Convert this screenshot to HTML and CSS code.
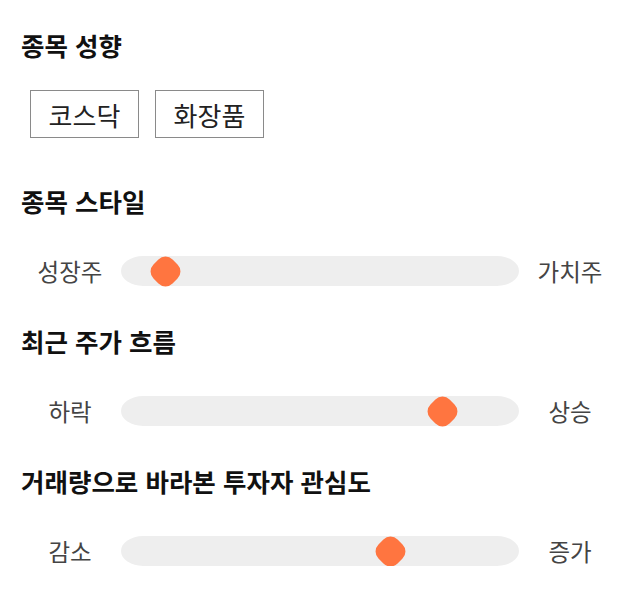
FILE: index.html
```html
<!DOCTYPE html>
<html lang="ko">
<head>
<meta charset="utf-8">
<link rel="stylesheet" href="styles.css">
</head>
<body>
<main class="page">
  <section class="section section-tags">
    <h2 class="title">종목 성향</h2>
    <div class="tags">
      <span class="tag">코스닥</span>
      <span class="tag">화장품</span>
    </div>
  </section>

  <section class="section">
    <h2 class="title">종목 스타일</h2>
    <div class="scale">
      <span class="label label-start">성장주</span>
      <div class="track"><span class="thumb" style="left: 11.2%"></span></div>
      <span class="label label-end">가치주</span>
    </div>
  </section>

  <section class="section">
    <h2 class="title">최근 주가 흐름</h2>
    <div class="scale">
      <span class="label label-start">하락</span>
      <div class="track"><span class="thumb" style="left: 80.7%"></span></div>
      <span class="label label-end">상승</span>
    </div>
  </section>

  <section class="section">
    <h2 class="title">거래량으로 바라본 투자자 관심도</h2>
    <div class="scale">
      <span class="label label-start">감소</span>
      <div class="track"><span class="thumb" style="left: 67.6%"></span></div>
      <span class="label label-end">증가</span>
    </div>
  </section>
</main>
</body>
</html>
```

FILE: styles.css
```css
* {
  box-sizing: border-box;
}

html, body {
  margin: 0;
  padding: 0;
  background: #ffffff;
}

body {
  font-family: "Noto Sans CJK KR", "Noto Sans", sans-serif;
  color: #111111;
}

.page {
  display: flex;
  flex-direction: column;
  gap: 39px;
  padding: 29px 27px 0 21px;
}

.section-tags {
  margin-bottom: 8px;
}

.title {
  margin: 0;
  font-size: 25.5px;
  font-weight: 700;
  line-height: 32px;
  color: #111111;
}

.tags {
  display: flex;
  gap: 16px;
  margin-top: 29px;
  padding-left: 9px;
}

.tag {
  display: flex;
  align-items: center;
  justify-content: center;
  height: 48px;
  width: 109px;
  border: 1px solid #8a8a8a;
  font-size: 26px;
  color: #222222;
}

.scale {
  display: grid;
  grid-template-columns: 92px 1fr 86px;
  column-gap: 8px;
  align-items: center;
  margin-top: 39px;
  height: 30px;
}

.label {
  font-size: 23.5px;
  color: #444444;
  line-height: 30px;
  white-space: nowrap;
  text-align: center;
}

.label-start {
  padding-left: 6px;
}

.track {
  position: relative;
  height: 30px;
  background: #eeeeee;
  border-radius: 22px / 15px;
}

.thumb {
  position: absolute;
  top: 50%;
  width: 27px;
  height: 27px;
  margin-left: -13.5px;
  margin-top: -13.5px;
  background: #ff7540;
  border-radius: 10px;
  transform: rotate(45deg);
}
```
